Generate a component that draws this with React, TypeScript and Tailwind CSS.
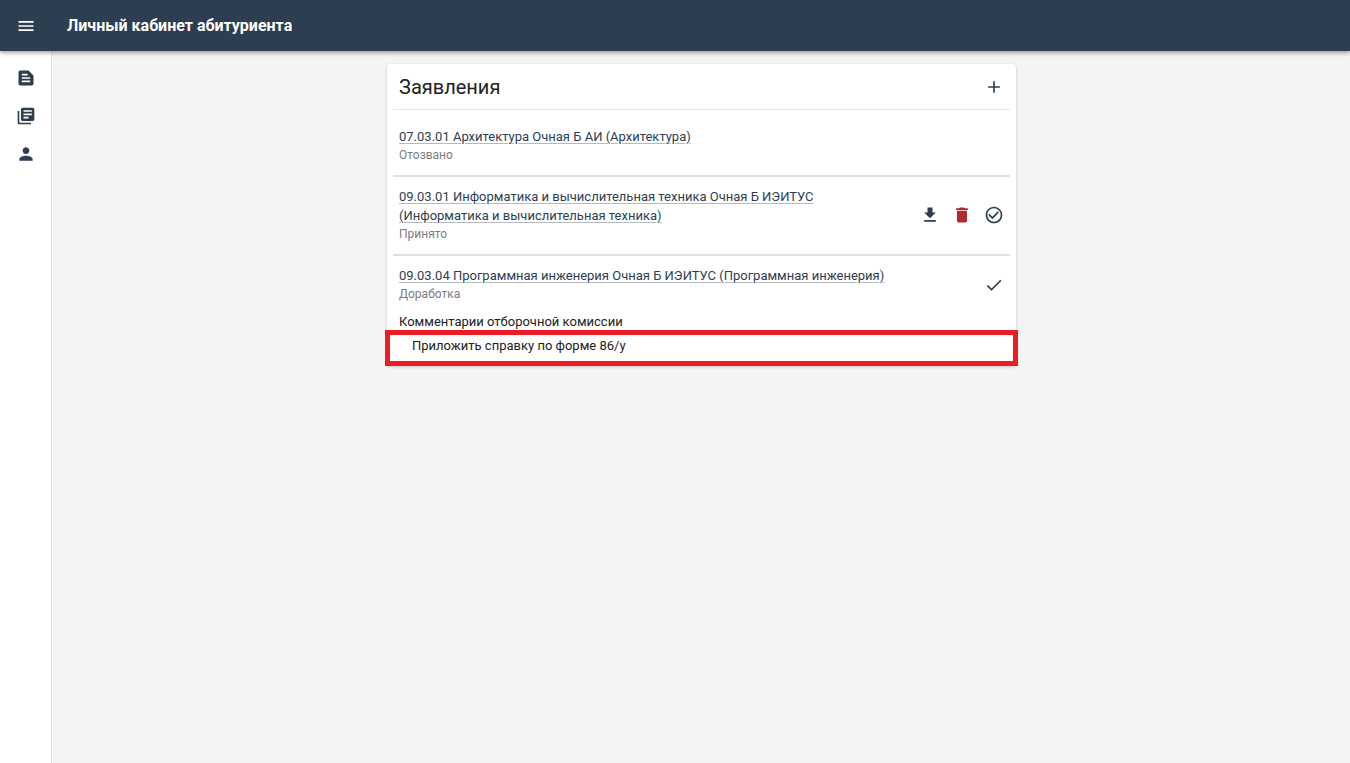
import type { ReactNode } from 'react';
import {
  MdAdd,
  MdCheck,
  MdCheckCircleOutline,
  MdDelete,
  MdFileDownload,
  MdLibraryBooks,
  MdMenu,
  MdPerson,
  MdTextSnippet,
} from 'react-icons/md';

type Application = {
  title: string;
  status: string;
  actions?: ReactNode;
};

function IconButton({ label, children }: { label: string; children: ReactNode }) {
  return (
    <button type="button" aria-label={label} className="flex size-8 items-center justify-center rounded-full text-xl">
      {children}
    </button>
  );
}

const applications: Application[] = [
  { title: '07.03.01 Архитектура Очная Б АИ (Архитектура)', status: 'Отозвано' },
  {
    title: '09.03.01 Информатика и вычислительная техника Очная Б ИЭИТУС (Информатика и вычислительная техника)',
    status: 'Принято',
    actions: (
      <>
        <IconButton label="Скачать"><MdFileDownload /></IconButton>
        <IconButton label="Удалить"><MdDelete className="text-[#b3282d]" /></IconButton>
        <IconButton label="Согласие"><MdCheckCircleOutline /></IconButton>
      </>
    ),
  },
  {
    title: '09.03.04 Программная инженерия Очная Б ИЭИТУС (Программная инженерия)',
    status: 'Доработка',
    actions: <IconButton label="Подтвердить"><MdCheck /></IconButton>,
  },
];

export default function App() {
  return (
    <div className="flex min-h-screen flex-col bg-[#f4f4f4] font-['Roboto',sans-serif] text-[13px] text-[#212121]">
      <header className="z-10 flex h-[51px] items-center bg-[#2d3e50] text-white shadow-[0_2px_4px_rgba(0,0,0,0.35)]">
        <button type="button" aria-label="Меню" className="flex w-[51px] justify-center text-xl">
          <MdMenu />
        </button>
        <h1 className="pl-4 text-base font-bold">Личный кабинет абитуриента</h1>
      </header>
      <div className="flex grow">
        <nav className="flex w-[52px] shrink-0 flex-col items-center gap-[18px] border-r border-[#e2e2e2] bg-white pt-[17px] text-xl text-[#2d3e50]">
          <a href="#applications" aria-label="Заявления"><MdTextSnippet /></a>
          <a href="#documents" aria-label="Документы"><MdLibraryBooks /></a>
          <a href="#profile" aria-label="Профиль"><MdPerson /></a>
        </nav>
        <main className="grow pt-[13px] pr-[14px] pl-[15px]">
          <section className="mx-auto max-w-[629px] rounded-sm bg-white shadow-[0_1px_3px_rgba(0,0,0,0.2)]">
            <div className="px-[6px]">
              <div className="flex h-[46px] items-center justify-between border-b border-[#e5e5e5] pl-[6px] text-[#2d3e50]">
                <h2 className="text-xl text-[#212121]">Заявления</h2>
                <IconButton label="Добавить"><MdAdd /></IconButton>
              </div>
              <ul className="divide-y-2 divide-[#e0e0e0] pt-[7px]">
                {applications.map((item) => (
                  <li key={item.title} className="flex items-center justify-between pt-[10px] pb-[11px] pl-[6px]">
                    <div className="max-w-[488px]">
                      <a
                        href="#application"
                        className="block leading-[19px] text-[#2d3e50] underline decoration-[#b4bac0] underline-offset-2"
                      >
                        {item.title}
                      </a>
                      <p className="text-xs leading-[18px] text-[#7d7d7d]">{item.status}</p>
                    </div>
                    <div className="-my-2 flex text-[#2d3e50]">{item.actions}</div>
                  </li>
                ))}
              </ul>
              <h3 className="pl-[6px] leading-4">Комментарии отборочной комиссии</h3>
            </div>
            <p className="-mx-[2px] border-[5px] border-[#ed1c24] bg-white pt-[2px] pb-[6px] pl-[22px] leading-[18px]">
              Приложить справку по форме 86/у
            </p>
          </section>
        </main>
      </div>
    </div>
  );
}
